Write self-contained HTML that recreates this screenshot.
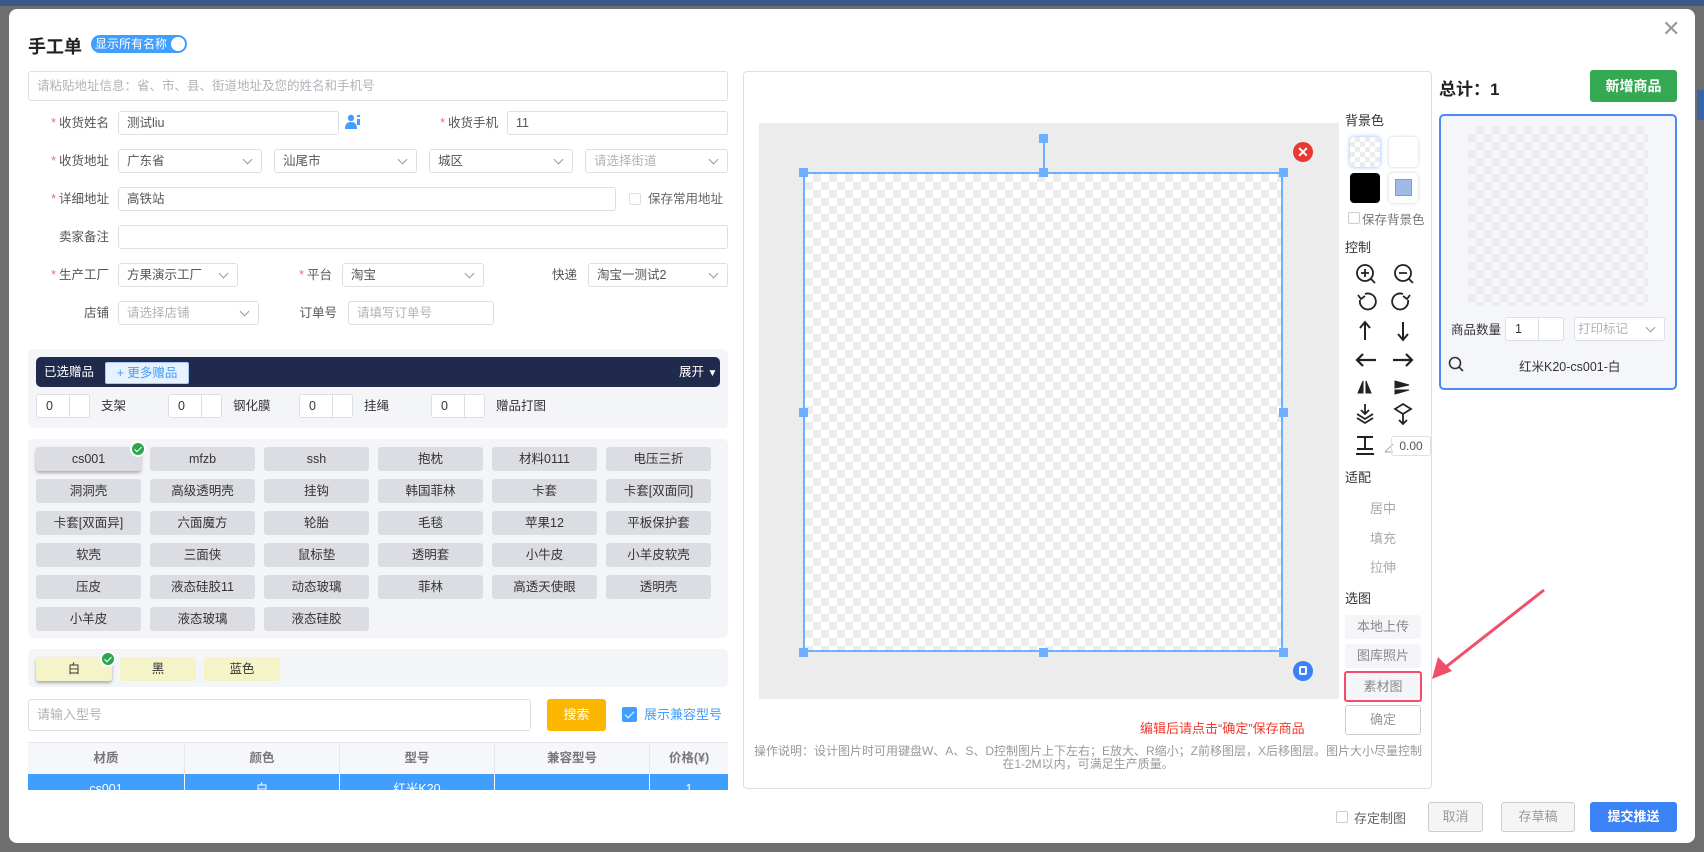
<!DOCTYPE html>
<html><head><meta charset="utf-8"><style>
*{box-sizing:border-box;margin:0;padding:0}
body{width:1704px;height:852px;overflow:hidden;background:#6e6e6e;font-family:"Liberation Sans","Noto Sans CJK SC",sans-serif;font-size:13px;color:#333;position:relative}
.a{position:absolute}
.modal{left:9px;top:9px;width:1686px;height:834px;background:#fff;border-radius:8px}
.inp{position:absolute;border:1px solid #dcdfe6;border-radius:3px;background:#fff;height:24px;line-height:22px;padding-left:8px;font-size:12.5px;color:#555}
.ph{color:#b0b3b8}
.sel::after{content:"";position:absolute;right:10px;top:6px;width:6px;height:6px;border-right:1px solid #999;border-bottom:1px solid #999;transform:rotate(45deg)}
.lbl{position:absolute;font-size:12.5px;color:#555;text-align:right;line-height:24px}
.lbl b{color:#f56c6c;font-weight:normal;margin-right:3px}
.tag{position:absolute;width:105px;height:24px;background:#dcdde2;border-radius:3px;text-align:center;line-height:24px;font-size:12.5px;color:#333}
.chk{position:absolute;width:16px;height:16px;border-radius:50%;background:#2da44e;border:2px solid #fff}
.chk::after{content:"";position:absolute;left:4px;top:2px;width:3px;height:6px;border-right:1.5px solid #fff;border-bottom:1.5px solid #fff;transform:rotate(45deg)}
.checker{background-color:#fff;background-image:conic-gradient(#ececec 25%,transparent 0 50%,#ececec 0 75%,transparent 0);background-size:16px 16px}
.num{position:absolute;width:54px;height:24px;border:1px solid #dcdfe6;border-radius:3px;background:#fff;font-size:12.5px;line-height:22px;padding-left:9px}
.num::after{content:"";position:absolute;left:32px;top:0;width:20px;height:22px;border-left:1px solid #dcdfe6}
.gl{position:absolute;font-size:12.5px;line-height:24px}
.btn{position:absolute;border-radius:3px;text-align:center;font-size:13px}
</style></head><body>
<div class="a" style="left:0;top:0;width:1704px;height:6px;background:#3b5a8c"></div>
<div class="a" style="left:1697px;top:90px;width:7px;height:30px;background:#3a64a8"></div>
<div class="a modal"></div>

<div class="a" style="left:28px;top:33px;font-size:18px;font-weight:bold;color:#222">手工单</div>
<div class="a" style="left:91px;top:35px;width:96px;height:18px;border-radius:9px;background:#409eff;color:#fff;font-size:12px;line-height:18px;padding-left:4px">显示所有名称<span style="position:absolute;right:2px;top:2px;width:14px;height:14px;border-radius:50%;background:#fff"></span></div>

<div class="inp ph" style="left:28px;top:71px;width:700px;height:30px;line-height:28px">请粘贴地址信息：省、市、县、街道地址及您的姓名和手机号</div>

<div class="lbl" style="left:30px;top:111px;width:79px"><b>*</b>收货姓名</div>
<div class="inp" style="left:118px;top:111px;width:221px">测试liu</div>
<svg class="a" style="left:345px;top:114px" width="16" height="16" viewBox="0 0 16 16"><circle cx="6" cy="4" r="3.2" fill="#409eff"/><path d="M0 15c0-5 2-7 6-7s6 2 6 7z" fill="#409eff"/><rect x="12" y="1" width="3" height="2" fill="#409eff"/><rect x="12" y="5" width="3" height="6" fill="#409eff"/></svg>
<div class="lbl" style="left:420px;top:111px;width:78px"><b>*</b>收货手机</div>
<div class="inp" style="left:507px;top:111px;width:221px">11</div>

<div class="lbl" style="left:30px;top:149px;width:79px"><b>*</b>收货地址</div>
<div class="inp sel" style="left:118px;top:149px;width:144px">广东省</div>
<div class="inp sel" style="left:274px;top:149px;width:143px">汕尾市</div>
<div class="inp sel" style="left:429px;top:149px;width:144px">城区</div>
<div class="inp sel ph" style="left:585px;top:149px;width:143px">请选择街道</div>

<div class="lbl" style="left:30px;top:187px;width:79px"><b>*</b>详细地址</div>
<div class="inp" style="left:118px;top:187px;width:498px">高铁站</div>
<div class="a" style="left:629px;top:193px;width:12px;height:12px;border:1px solid #dcdfe6;border-radius:2px"></div>
<div class="gl" style="left:648px;top:187px;color:#666">保存常用地址</div>

<div class="lbl" style="left:30px;top:225px;width:79px">卖家备注</div>
<div class="inp" style="left:118px;top:225px;width:610px"></div>

<div class="lbl" style="left:30px;top:263px;width:79px"><b>*</b>生产工厂</div>
<div class="inp sel" style="left:118px;top:263px;width:120px">方果演示工厂</div>
<div class="lbl" style="left:260px;top:263px;width:72px"><b>*</b>平台</div>
<div class="inp sel" style="left:342px;top:263px;width:142px">淘宝</div>
<div class="lbl" style="left:520px;top:263px;width:57px">快递</div>
<div class="inp sel" style="left:588px;top:263px;width:140px">淘宝一测试2</div>

<div class="lbl" style="left:30px;top:301px;width:79px">店铺</div>
<div class="inp sel ph" style="left:118px;top:301px;width:141px">请选择店铺</div>
<div class="lbl" style="left:280px;top:301px;width:57px">订单号</div>
<div class="inp ph" style="left:348px;top:301px;width:146px">请填写订单号</div>

<div class="a" style="left:28px;top:349px;width:700px;height:79px;background:#f4f5f9;border-radius:5px"></div>
<div class="a" style="left:36px;top:357px;width:684px;height:30px;background:#1f2a4d;border-radius:5px"></div>
<div class="a" style="left:44px;top:357px;color:#fff;font-size:12.5px;line-height:30px">已选赠品</div>
<div class="a" style="left:105px;top:362px;width:84px;height:22px;background:#e8f1ff;border:1px solid #a9c8f5;border-radius:2px;color:#409eff;font-size:12.5px;line-height:20px;text-align:center">+ 更多赠品</div>
<div class="a" style="left:679px;top:357px;color:#fff;font-size:12.5px;line-height:30px">展开 <span style="font-size:10px">▼</span></div>
<div class="num" style="left:36px;top:394px">0</div><div class="gl" style="left:101px;top:394px">支架</div>
<div class="num" style="left:168px;top:394px">0</div><div class="gl" style="left:233px;top:394px">钢化膜</div>
<div class="num" style="left:299px;top:394px">0</div><div class="gl" style="left:364px;top:394px">挂绳</div>
<div class="num" style="left:431px;top:394px">0</div><div class="gl" style="left:496px;top:394px">赠品打图</div>

<div class="a" style="left:28px;top:439px;width:700px;height:199px;background:#f4f5f9;border-radius:5px"></div>
<div class="tag" style="left:36px;top:447px;box-shadow:0 2px 3px rgba(0,0,0,.3)">cs001</div><div class="chk" style="left:130px;top:441px"></div>
<div class="tag" style="left:150px;top:447px">mfzb</div>
<div class="tag" style="left:264px;top:447px">ssh</div>
<div class="tag" style="left:378px;top:447px">抱枕</div>
<div class="tag" style="left:492px;top:447px">材料0111</div>
<div class="tag" style="left:606px;top:447px">电压三折</div>
<div class="tag" style="left:36px;top:479px">洞洞壳</div>
<div class="tag" style="left:150px;top:479px">高级透明壳</div>
<div class="tag" style="left:264px;top:479px">挂钩</div>
<div class="tag" style="left:378px;top:479px">韩国菲林</div>
<div class="tag" style="left:492px;top:479px">卡套</div>
<div class="tag" style="left:606px;top:479px">卡套[双面同]</div>
<div class="tag" style="left:36px;top:511px">卡套[双面异]</div>
<div class="tag" style="left:150px;top:511px">六面魔方</div>
<div class="tag" style="left:264px;top:511px">轮胎</div>
<div class="tag" style="left:378px;top:511px">毛毯</div>
<div class="tag" style="left:492px;top:511px">苹果12</div>
<div class="tag" style="left:606px;top:511px">平板保护套</div>
<div class="tag" style="left:36px;top:543px">软壳</div>
<div class="tag" style="left:150px;top:543px">三面侠</div>
<div class="tag" style="left:264px;top:543px">鼠标垫</div>
<div class="tag" style="left:378px;top:543px">透明套</div>
<div class="tag" style="left:492px;top:543px">小牛皮</div>
<div class="tag" style="left:606px;top:543px">小羊皮软壳</div>
<div class="tag" style="left:36px;top:575px">压皮</div>
<div class="tag" style="left:150px;top:575px">液态硅胶11</div>
<div class="tag" style="left:264px;top:575px">动态玻璃</div>
<div class="tag" style="left:378px;top:575px">菲林</div>
<div class="tag" style="left:492px;top:575px">高透天使眼</div>
<div class="tag" style="left:606px;top:575px">透明壳</div>
<div class="tag" style="left:36px;top:607px">小羊皮</div>
<div class="tag" style="left:150px;top:607px">液态玻璃</div>
<div class="tag" style="left:264px;top:607px">液态硅胶</div>

<div class="a" style="left:28px;top:649px;width:700px;height:38px;background:#f4f5f9;border-radius:5px"></div>
<div class="tag" style="left:36px;top:657px;width:76px;background:#f4f4c8;box-shadow:0 2px 3px rgba(0,0,0,.3)">白</div><div class="chk" style="left:100px;top:651px"></div>
<div class="tag" style="left:120px;top:657px;width:76px;background:#f4f4c8">黑</div>
<div class="tag" style="left:204px;top:657px;width:76px;background:#f4f4c8">蓝色</div>

<div class="inp ph" style="left:28px;top:699px;width:503px;height:32px;line-height:30px;font-size:13px">请输入型号</div>
<div class="btn" style="left:547px;top:699px;width:59px;height:32px;background:#fbb700;color:#fff;line-height:32px">搜索</div>
<div class="a" style="left:622px;top:707px;width:15px;height:15px;background:#409eff;border-radius:2px"></div>
<div class="a" style="left:627px;top:709px;width:5px;height:9px;border-right:1.5px solid #fff;border-bottom:1.5px solid #fff;transform:rotate(45deg)"></div>
<div class="a" style="left:644px;top:699px;color:#409eff;line-height:32px;font-size:13px">展示兼容型号</div>

<div class="a" style="left:28px;top:742px;width:700px;height:48px;overflow:hidden;border-top:1px solid #e4e7ed">
 <div style="display:flex;height:31px;background:#f5f7fa;color:#777;font-size:12.5px;line-height:31px;text-align:center;font-weight:bold">
  <div style="width:157px;border-right:1px solid #e4e7ed">材质</div><div style="width:155px;border-right:1px solid #e4e7ed">颜色</div><div style="width:155px;border-right:1px solid #e4e7ed">型号</div><div style="width:155px;border-right:1px solid #e4e7ed">兼容型号</div><div style="flex:1">价格(¥)</div></div>
 <div style="display:flex;height:24px;background:#409eff;color:#fff;font-size:12.5px;line-height:30px;text-align:center">
  <div style="width:157px;border-right:1px solid #fff">cs001</div><div style="width:155px;border-right:1px solid #fff">白</div><div style="width:155px;border-right:1px solid #fff">红米K20</div><div style="width:155px;border-right:1px solid #fff"></div><div style="flex:1">1</div></div>
</div>

<!-- middle -->
<div class="a" style="left:743px;top:71px;width:689px;height:718px;border:1px solid #dcdfe6;border-radius:4px"></div>
<div class="a" style="left:759px;top:123px;width:580px;height:576px;background:#ececec"></div>
<div class="a checker" style="left:803px;top:172px;width:480px;height:480px;border:2px solid #6cb0ff"></div>
<div class="a" style="left:1043px;top:138px;width:2px;height:34px;background:#6cb0ff"></div>
<div class="a" style="left:1039px;top:134px;width:9px;height:9px;background:#6cb0ff"></div>
<div class="a" style="left:799px;top:168px;width:9px;height:9px;background:#6cb0ff"></div>
<div class="a" style="left:1039px;top:168px;width:9px;height:9px;background:#6cb0ff"></div>
<div class="a" style="left:1279px;top:168px;width:9px;height:9px;background:#6cb0ff"></div>
<div class="a" style="left:799px;top:408px;width:9px;height:9px;background:#6cb0ff"></div>
<div class="a" style="left:1279px;top:408px;width:9px;height:9px;background:#6cb0ff"></div>
<div class="a" style="left:799px;top:648px;width:9px;height:9px;background:#6cb0ff"></div>
<div class="a" style="left:1039px;top:648px;width:9px;height:9px;background:#6cb0ff"></div>
<div class="a" style="left:1279px;top:648px;width:9px;height:9px;background:#6cb0ff"></div>
<div class="a" style="left:1293px;top:142px;width:20px;height:20px;border-radius:50%;background:#e53935;color:#fff;text-align:center;line-height:20px;font-size:14px;font-weight:bold">✕</div>
<div class="a" style="left:1293px;top:661px;width:20px;height:20px;border-radius:50%;background:#3b82f6"></div>
<div class="a" style="left:1299px;top:666px;width:8px;height:9px;border:2px solid #fff;border-radius:2px"></div>

<div class="a" style="left:1345px;top:110px;font-size:13px">背景色</div>
<div class="a checker" style="left:1350px;top:137px;width:30px;height:30px;border-radius:4px;box-shadow:0 0 4px #8ab8ff;background-size:10px 10px"></div>
<div class="a" style="left:1389px;top:137px;width:29px;height:30px;border-radius:4px;background:#fff;box-shadow:0 0 3px #ccc"></div>
<div class="a" style="left:1350px;top:173px;width:30px;height:30px;border-radius:4px;background:#000"></div>
<div class="a" style="left:1389px;top:173px;width:29px;height:30px;border-radius:4px;background:#fff;box-shadow:0 0 3px #ccc"></div>
<div class="a" style="left:1395px;top:179px;width:17px;height:17px;background:#9fb9e8;border:1px solid #7d9bd4"></div>
<div class="a" style="left:1348px;top:212px;width:12px;height:12px;border:1px solid #ccc;border-radius:2px"></div>
<div class="a" style="left:1362px;top:209px;font-size:12.5px;color:#777">保存背景色</div>
<div class="a" style="left:1345px;top:237px;font-size:13px">控制</div>
<svg class="a" style="left:1352px;top:260px" width="80" height="200" viewBox="0 0 80 200" fill="none" stroke="#222" stroke-width="1.8">
 <circle cx="13" cy="13" r="8"/><path d="M9 13h8M13 9v8M19 19l4 4"/>
 <circle cx="51" cy="13" r="8"/><path d="M47 13h8M57 19l4 4"/>
 <path d="M8 40a8 8 0 1 0 5-6"/><path d="M6 35l3 4 4-3"/>
 <path d="M56 40a8 8 0 1 1-5-6"/><path d="M58 35l-3 4-4-3"/>
 <path d="M13 80v-17M8 68l5-6 5 6" stroke-width="2"/>
 <path d="M51 62v17M46 74l5 6 5-6" stroke-width="2"/>
 <path d="M24 100H5M11 94l-6 6 6 6" stroke-width="2.2"/>
 <path d="M41 100h19M54 94l6 6-6 6" stroke-width="2.2"/>
 <path d="M11 121l-5 12h5zM14 121l5 12h-5z" fill="#222" stroke-width="1"/>
 <path d="M43 121l14 4-14 3zM43 130h14l-14 4z" fill="#222" stroke-width="1"/>
 <path d="M13 144v10M9 150l4 4 4-4M5 154l8 5 8-5M5 158l8 5 8-5"/>
 <path d="M51 144l-8 5 8 5 8-5zM51 154v10M47 160l4 4 4-4"/>
 <path d="M5 177h16M13 177v12M5 189h16M4 194h18" stroke-width="2"/>
 <path d="M33 192l8-8M33 192h8" stroke="#aaa" stroke-width="1"/>
</svg>
<div class="a" style="left:1391px;top:436px;width:40px;height:20px;border:1px solid #dcdfe6;border-radius:3px;font-size:12px;line-height:18px;text-align:center;color:#555">0.00</div>
<div class="a" style="left:1345px;top:467px;font-size:13px">适配</div>
<div class="a" style="left:1370px;top:498px;font-size:13px;color:#aaa">居中</div>
<div class="a" style="left:1370px;top:528px;font-size:13px;color:#aaa">填充</div>
<div class="a" style="left:1370px;top:557px;font-size:13px;color:#aaa">拉伸</div>
<div class="a" style="left:1345px;top:588px;font-size:13px">选图</div>
<div class="btn" style="left:1345px;top:615px;width:76px;height:24px;background:#f4f5f8;color:#888;line-height:24px">本地上传</div>
<div class="btn" style="left:1345px;top:644px;width:76px;height:24px;background:#f4f5f8;color:#888;line-height:24px">图库照片</div>
<div class="btn" style="left:1344px;top:671px;width:78px;height:31px;background:#f4f5f8;color:#888;line-height:27px;border:2px solid #f04e6a">素材图</div>
<div class="btn" style="left:1345px;top:705px;width:76px;height:30px;border:1px solid #ccc;color:#999;line-height:28px">确定</div>
<div class="a" style="left:1140px;top:718px;color:#f03a2e;font-size:13px">编辑后请点击“确定”保存商品</div>
<div class="a" style="left:749px;top:745px;width:678px;text-align:center;font-size:12px;color:#999;line-height:13px">操作说明：设计图片时可用键盘W、A、S、D控制图片上下左右；E放大、R缩小；Z前移图层，X后移图层。图片大小尽量控制在1-2M以内，可满足生产质量。</div>

<svg class="a" style="left:1420px;top:580px" width="140" height="110" viewBox="0 0 140 110"><path d="M124 10L22 90" stroke="#f04e6a" stroke-width="3"/><path d="M12 99l6-22 14 14z" fill="#f04e6a"/></svg>

<!-- right -->
<div class="a" style="left:1439px;top:75px;font-size:17px;font-weight:bold;color:#222">总计：1</div>
<div class="btn" style="left:1590px;top:70px;width:87px;height:32px;background:#34a853;color:#fff;line-height:32px;font-weight:bold;font-size:14px">新增商品</div>
<div class="a" style="left:1439px;top:114px;width:238px;height:276px;border:2px solid #4a8af4;border-radius:5px;background:#f4f6fa"></div>
<div class="a checker" style="left:1468px;top:126px;width:180px;height:180px;background-color:#f4f6fa"></div>
<div class="a" style="left:1451px;top:319px;font-size:12.5px">商品数量</div>
<div class="num" style="left:1505px;top:317px;width:59px">1</div>
<div class="inp sel ph" style="left:1574px;top:317px;width:91px;padding-left:3px">打印标记</div>
<svg class="a" style="left:1448px;top:356px" width="16" height="16" fill="none" stroke="#333" stroke-width="1.6"><circle cx="7" cy="7" r="5.5"/><path d="M11 11l4 4"/></svg>
<div class="a" style="left:1519px;top:356px;font-size:12.5px">红米K20-cs001-白</div>
<div class="a" style="left:1662px;top:18px;font-size:22px;color:#999;line-height:22px">✕</div>

<div class="a" style="left:1336px;top:811px;width:12px;height:12px;border:1px solid #ccc;border-radius:2px"></div>
<div class="a" style="left:1354px;top:808px;font-size:13px;color:#666">存定制图</div>
<div class="btn" style="left:1428px;top:802px;width:55px;height:30px;border:1px solid #ccc;background:#f5f5f5;color:#999;line-height:28px">取消</div>
<div class="btn" style="left:1501px;top:802px;width:74px;height:30px;border:1px solid #ccc;background:#f5f5f5;color:#999;line-height:28px">存草稿</div>
<div class="btn" style="left:1590px;top:802px;width:87px;height:30px;background:#3b82f6;color:#fff;line-height:30px;font-weight:bold">提交推送</div>
</body></html>
